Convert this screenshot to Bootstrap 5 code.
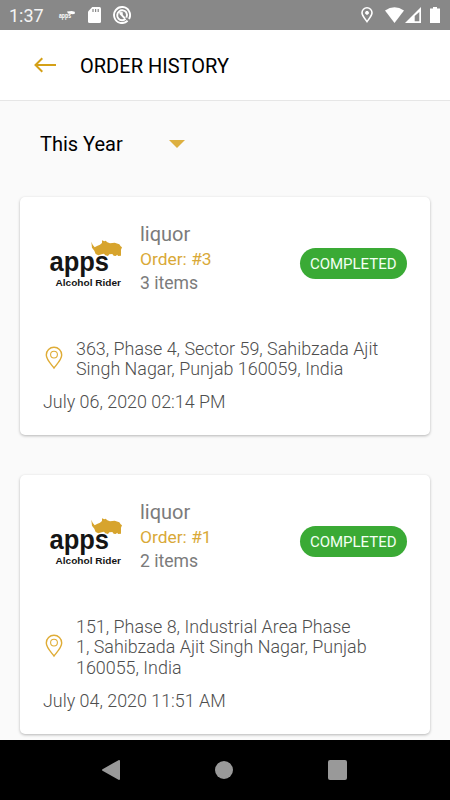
<!DOCTYPE html>
<html lang="en">
<head>
<meta charset="utf-8">
<meta name="viewport" content="width=device-width, initial-scale=1">
<title>Order History</title>
<link href="https://cdn.jsdelivr.net/npm/bootstrap@5.3.0/dist/css/bootstrap.min.css" rel="stylesheet">
<style>
body{font-family:Roboto,"Liberation Sans",sans-serif;width:450px;height:800px;background:#fafafa;color:#000}
svg{display:block;flex:none}
.status-bar{height:30px;background:#888;color:#fff;padding-left:9px;padding-right:8px}
.clock{font-size:18px;line-height:30px;width:49px;padding-top:1px;color:#f4f4f4}
.sd-icon,.sync-icon,.wifi-icon{margin-left:12px}
.signal-icon{margin-left:1px}
.battery-icon{margin:0 2px 0 8px}
.app-bar{height:71px;border-bottom:1px solid #e6e6e6;padding-left:33px}
.app-title{font-size:20px;line-height:24px;margin-left:23px;padding-top:1px;letter-spacing:.02px}
.period{height:24px;margin:31px 0 41px 40px;font-size:20px;line-height:24px}
.period span{width:83px;white-space:nowrap}
.period svg{margin-left:46px}
.order-card{margin:0 20px 40px;padding:25px 23px 24px;border:0;border-radius:5px;box-shadow:0 1px 3px rgba(0,0,0,.28)}
.order-top{height:116px}
.brand{margin:10px 10px 0 -3px}
.store{font-size:20px;line-height:24px;color:#7b7b7b}
.order-no{font-size:17.4px;line-height:25px;padding-top:1px;color:#d9a938}
.items{font-size:17.6px;line-height:23px;color:#7b7b7b}
.pill{margin-top:26px;margin-left:auto;width:107.5px;height:30.5px;font-size:15px;line-height:32px;font-weight:400;padding:0;background:#3aaa35;color:#f3fff3}
.addr{font-size:17.9px;line-height:20.6px;color:#4e4e4e;font-weight:300;margin-bottom:12px}
.addr div{padding-top:.6px;margin-bottom:-.6px}
.addr svg{margin:-2px 12px 0 2px}
.stamp{font-size:17.9px;line-height:20px;padding-top:.6px;margin-bottom:-.6px;color:#4e4e4e;font-weight:300}
.nav-keys{height:60px;background:#000;padding:0 102px}
</style>
</head>
<body class="d-flex flex-column overflow-hidden">
<header class="status-bar d-flex align-items-center flex-shrink-0">
  <span class="clock">1:37</span>
  <svg width="18" height="12" viewBox="0 0 18 12"><text x="1" y="9" font-family="Liberation Sans" font-weight="700" font-size="6.500" textLength="12" lengthAdjust="spacingAndGlyphs" fill="#fff">apps</text><path d="M9 2.500l1 2 5 .8 2-.8-.3-1.700-3-.7-2 .2z" fill="#fff"/></svg>
  <svg class="sd-icon" width="13" height="16" viewBox="0 0 13 16"><path d="M4.300 0H11.500Q13 0 13 1.500V14.500Q13 16 11.500 16H1.500Q0 16 0 14.500V4.500z" fill="#fff"/><path d="M5 2v3M7.600 2v3M10.200 2v3" stroke="#888" stroke-width="1.200"/></svg>
  <svg class="sync-icon" width="18" height="18" viewBox="0 0 18 18" fill="none" stroke="#fff" stroke-width="1.900"><path d="M14.600 14.800A8 8 0 1 1 16 13"/><path d="M12.700 12.900A5 5 0 1 1 13.300 6.400Q14.700 8.800 13.400 11.700"/><path d="M6.800 7.200L12 12.500"/><path d="M6.300 6.400h3v2.500z" fill="#fff" stroke-width=".8"/></svg>
  <svg class="ms-auto" width="12" height="16" viewBox="0 0 12 16" fill="none" stroke="#fff" stroke-width="1.600"><path d="M6 14.600C3.500 11.200 1 8.500 1 5.800a5 5 0 0 1 10 0C11 8.500 8.500 11.200 6 14.600z"/><circle cx="6" cy="5.800" r="1.500" fill="#fff" stroke-width="1"/></svg>
  <svg class="wifi-icon" width="19" height="16" viewBox="0 0 19 16"><path d="M0 3.500Q9.500-3 19 3.500L9.500 16z" fill="#fff"/></svg>
  <svg class="signal-icon" width="17" height="16" viewBox="0 0 17 16"><path d="M16 0V16H0z" fill="#fff"/><path d="M14.300 5V14.200H9.700V9z" fill="#888"/></svg>
  <svg class="battery-icon" width="10" height="16" viewBox="0 0 10 16"><path d="M3 0h4v1.500h3V16H0V1.500h3z" fill="#fff"/></svg>
</header>

<nav class="app-bar bg-white d-flex align-items-center flex-shrink-0">
  <svg width="24" height="16" viewBox="0 0 24 16" fill="none" stroke="#d4a017" stroke-width="2"><path d="M23 8H3M9.300 1.300L2.500 8l6.800 6.700"/></svg>
  <h1 class="app-title fw-normal mb-0">ORDER HISTORY</h1>
</nav>

<main class="flex-grow-1 overflow-hidden">
  <div class="period d-flex align-items-center">
    <span>This Year</span>
    <svg width="16" height="8" viewBox="0 0 16 8"><path d="M0 0H16L8 8z" fill="#ddb040"/></svg>
  </div>

  <article class="card order-card">
    <div class="order-top d-flex align-items-start">
      <svg class="brand" width="90" height="60" viewBox="0 0 90 60">
        <g font-family="Liberation Sans, sans-serif" font-weight="700" fill="#151515"><text x="9.500" y="39" font-size="27" textLength="59.500" lengthAdjust="spacingAndGlyphs">apps</text><text x="15.500" y="54" font-size="9.300" textLength="65.500" lengthAdjust="spacingAndGlyphs">Alcohol Rider</text></g>
        <path id="rhino" transform="translate(-30 -47) scale(.3333)" fill="#d7a42d" d="M244 170L248 179 254 187 261 183 270 179 276 174 276 166 283 169 287 167 292 172 300 175 314 173 328 178 332 184 336 187 333 194 333 212 324 213 322 209 317 213 311 212 307 207 298 208 294 213 286 211 282 206 275 208 265 211 257 207 253 197 246 188z"/>
      </svg>
      <div>
        <div class="store">liquor</div>
        <div class="order-no">Order: #3</div>
        <div class="items">3 items</div>
      </div>
      <span class="badge rounded-pill pill">COMPLETED</span>
    </div>
    <div class="addr d-flex align-items-center">
      <svg width="19" height="24" viewBox="0 0 19 24" fill="none" stroke="#dfac36" stroke-width="1.400"><path d="M9 22C6 18 1.300 13.500 1.300 9a7.700 7.700 0 0 1 15.400 0C16.700 13.500 12 18 9 22z"/><circle cx="9" cy="8.600" r="3.400" stroke-width="1.100"/></svg>
      <div>363, Phase 4, Sector 59, Sahibzada Ajit<br>Singh Nagar, Punjab 160059, India</div>
    </div>
    <div class="stamp">July 06, 2020 02:14 PM</div>
  </article>

  <article class="card order-card">
    <div class="order-top d-flex align-items-start">
      <svg class="brand" width="90" height="60" viewBox="0 0 90 60">
        <g font-family="Liberation Sans, sans-serif" font-weight="700" fill="#151515"><text x="9.500" y="39" font-size="27" textLength="59.500" lengthAdjust="spacingAndGlyphs">apps</text><text x="15.500" y="54" font-size="9.300" textLength="65.500" lengthAdjust="spacingAndGlyphs">Alcohol Rider</text></g>
        <use href="#rhino"/>
      </svg>
      <div>
        <div class="store">liquor</div>
        <div class="order-no">Order: #1</div>
        <div class="items">2 items</div>
      </div>
      <span class="badge rounded-pill pill">COMPLETED</span>
    </div>
    <div class="addr d-flex align-items-center">
      <svg width="19" height="24" viewBox="0 0 19 24" fill="none" stroke="#dfac36" stroke-width="1.400"><path d="M9 22C6 18 1.300 13.500 1.300 9a7.700 7.700 0 0 1 15.400 0C16.700 13.500 12 18 9 22z"/><circle cx="9" cy="8.600" r="3.400" stroke-width="1.100"/></svg>
      <div>151, Phase 8, Industrial Area Phase<br>1, Sahibzada Ajit Singh Nagar, Punjab<br>160055, India</div>
    </div>
    <div class="stamp">July 04, 2020 11:51 AM</div>
  </article>
</main>

<footer class="nav-keys d-flex justify-content-between align-items-center flex-shrink-0">
  <svg width="18" height="20" viewBox="0 0 18 20"><path d="M17 1V19L1 10z" fill="#999" stroke="#999" stroke-width="2" stroke-linejoin="round"/></svg>
  <svg width="18" height="18" viewBox="0 0 18 18"><circle cx="9" cy="9" r="9" fill="#999"/></svg>
  <svg width="20" height="20" viewBox="0 0 20 20"><rect width="19" height="20" rx="2" fill="#999"/></svg>
</footer>
</body>
</html>
